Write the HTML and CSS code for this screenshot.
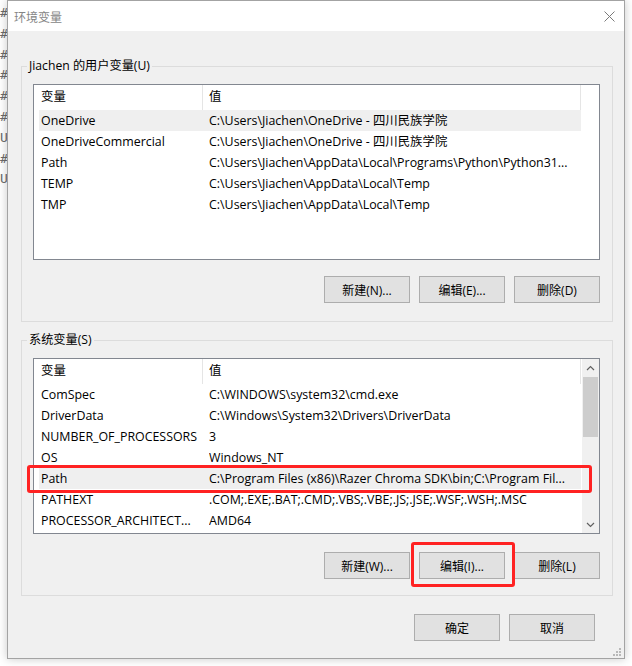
FILE: index.html
```html
<!DOCTYPE html>
<html lang="zh-CN">
<head>
<meta charset="utf-8">
<title>环境变量</title>
<link rel="stylesheet" href="styles.css">
</head>
<body>
<div class="behind">
  <div>#</div><div>#</div><div>#</div><div>#</div><div>#</div><div>#</div><div>U</div><div>#</div><div>U</div>
</div>
<div class="window">
  <div class="titlebar">
    <span class="title">环境变量</span>
    <svg class="close" width="11" height="11" viewBox="0 0 11 11"><path d="M0.5 0.5L10.5 10.5M10.5 0.5L0.5 10.5" stroke="#7a7a7a" stroke-width="1" fill="none"/></svg>
  </div>
  <div class="body">
    <fieldset class="group">
      <legend>Jiachen 的用户变量(U)</legend>
      <div class="list">
        <div class="main">
          <div class="header"><div class="h1">变量</div><div class="h2">值</div></div>
          <div class="row sel"><div class="c1">OneDrive</div><div class="c2">C:\Users\Jiachen\OneDrive - 四川民族学院</div></div>
          <div class="row"><div class="c1">OneDriveCommercial</div><div class="c2">C:\Users\Jiachen\OneDrive - 四川民族学院</div></div>
          <div class="row"><div class="c1">Path</div><div class="c2">C:\Users\Jiachen\AppData\Local\Programs\Python\Python31...</div></div>
          <div class="row"><div class="c1">TEMP</div><div class="c2">C:\Users\Jiachen\AppData\Local\Temp</div></div>
          <div class="row"><div class="c1">TMP</div><div class="c2">C:\Users\Jiachen\AppData\Local\Temp</div></div>
        </div>
        <div class="filler"></div>
      </div>
      <div class="buttons first">
        <button class="btn">新建(N)...</button>
        <button class="btn">编辑(E)...</button>
        <button class="btn">删除(D)</button>
      </div>
    </fieldset>
    <fieldset class="group second">
      <legend>系统变量(S)</legend>
      <div class="list">
        <div class="main">
          <div class="header"><div class="h1">变量</div><div class="h2">值</div></div>
          <div class="row"><div class="c1">ComSpec</div><div class="c2">C:\WINDOWS\system32\cmd.exe</div></div>
          <div class="row"><div class="c1">DriverData</div><div class="c2">C:\Windows\System32\Drivers\DriverData</div></div>
          <div class="row"><div class="c1">NUMBER_OF_PROCESSORS</div><div class="c2">3</div></div>
          <div class="row"><div class="c1">OS</div><div class="c2">Windows_NT</div></div>
          <div class="row sel"><div class="c1">Path</div><div class="c2">C:\Program Files (x86)\Razer Chroma SDK\bin;C:\Program Fil...</div></div>
          <div class="row"><div class="c1">PATHEXT</div><div class="c2">.COM;.EXE;.BAT;.CMD;.VBS;.VBE;.JS;.JSE;.WSF;.WSH;.MSC</div></div>
          <div class="row"><div class="c1">PROCESSOR_ARCHITECT...</div><div class="c2">AMD64</div></div>
        </div>
        <div class="scrollbar">
          <div class="arrow"><svg width="9" height="6" viewBox="0 0 9 6"><path d="M1 5L4.5 1.5L8 5" stroke="#606060" stroke-width="1.2" fill="none"/></svg></div>
          <div class="track"><div class="thumb"></div></div>
          <div class="arrow"><svg width="9" height="6" viewBox="0 0 9 6"><path d="M1 1L4.5 4.5L8 1" stroke="#606060" stroke-width="1.2" fill="none"/></svg></div>
        </div>
      </div>
      <div class="buttons">
        <button class="btn">新建(W)...</button>
        <button class="btn">编辑(I)...</button>
        <button class="btn">删除(L)</button>
      </div>
    </fieldset>
    <div class="footer">
      <button class="btn">确定</button>
      <button class="btn">取消</button>
    </div>
  </div>
  <div class="mark mark-path"></div>
  <div class="mark mark-edit"></div>
  <svg class="grip" width="8" height="8" viewBox="0 0 8 8" fill="#b8b8b8"><rect x="6" y="0" width="2" height="2"/><rect x="3" y="3" width="2" height="2"/><rect x="6" y="3" width="2" height="2"/><rect x="0" y="6" width="2" height="2"/><rect x="3" y="6" width="2" height="2"/><rect x="6" y="6" width="2" height="2"/></svg>
</div>
</body>
</html>
```
FILE: styles.css
```css
html, body {
  margin: 0;
  padding: 0;
}
body {
  width: 632px;
  height: 666px;
  overflow: hidden;
  background: #ffffff;
  display: flex;
  font-family: "Open Sans", "Noto Sans CJK SC", sans-serif;
  font-size: 12px;
  color: #000;
}
.behind {
  width: 7px;
  flex: none;
  overflow: hidden;
  padding-top: 3px;
  color: #6a6a6a;
  font-family: "DejaVu Sans Mono", monospace;
  font-size: 13px;
  line-height: 20.8px;
}
.window {
  position: relative;
  width: 618px;
  height: 659px;
  flex: none;
  box-sizing: border-box;
  border: 1px solid #a3a3a3;
  background: #f0f0f0;
  box-shadow: 0 0 9px rgba(0, 0, 0, 0.22);
  display: flex;
  flex-direction: column;
}
.titlebar {
  height: 30px;
  flex: none;
  background: #ffffff;
  display: flex;
  align-items: center;
  justify-content: space-between;
  padding: 0 9px 0 6px;
}
.title {
  color: #858585;
  font-family: "Noto Sans CJK SC", sans-serif;
  font-size: 12px;
}
.close {
  display: block;
}
.body {
  flex: 1;
  display: flex;
  flex-direction: column;
  padding: 27px 11px 0 13px;
}
.group {
  margin: 0;
  padding: 10px 12px 18px 11px;
  border: 1px solid #dcdcdc;
  min-width: 0;
}
.group.second {
  margin-top: 10px;
  padding-bottom: 16px;
}
.group legend {
  margin-left: -6px;
  padding: 0 2px;
  line-height: 16px;
  font-size: 12.2px;
}
.list {
  height: 176px;
  box-sizing: border-box;
  border: 1px solid #828790;
  background: #ffffff;
  display: flex;
  font-size: 12.4px;
}
.main {
  width: 547px;
  flex: none;
}
.filler {
  flex: 1;
}
.header {
  display: flex;
  height: 25px;
  line-height: 24px;
}
.h1 {
  width: 161px;
  padding-left: 7px;
  border-right: 1px solid #e5e5e5;
}
.h2 {
  flex: 1;
  padding-left: 6px;
  border-right: 1px solid #e5e5e5;
}
.row {
  display: flex;
  height: 21px;
  line-height: 21px;
  margin-left: 5px;
  white-space: nowrap;
}
.row.sel {
  background: #efefef;
}
.c1 {
  width: 168px;
  flex: none;
  padding-left: 2px;
  overflow: hidden;
}
.c2 {
  flex: 1;
  overflow: hidden;
}
.scrollbar {
  width: 17px;
  flex: none;
  margin-left: auto;
  background: #f0f0f0;
  display: flex;
  flex-direction: column;
}
.arrow {
  height: 17px;
  display: flex;
  align-items: center;
  justify-content: center;
}
.arrow svg {
  display: block;
}
.track {
  flex: 1;
  padding: 1px 1px 0 1px;
}
.thumb {
  height: 60px;
  background: #cdcdcd;
}
.buttons {
  display: flex;
  justify-content: flex-end;
  gap: 9px;
  margin-top: 18px;
}
.buttons.first {
  margin-top: 16px;
}
.btn {
  width: 86px;
  height: 27px;
  box-sizing: border-box;
  margin: 0;
  padding: 0;
  border: 1px solid #adadad;
  background: #e1e1e1;
  font-family: "Open Sans", "Noto Sans CJK SC", sans-serif;
  font-size: 12px;
  color: #000;
}
.footer {
  display: flex;
  justify-content: flex-end;
  gap: 9px;
  margin-top: 18px;
  padding-right: 18px;
}
.mark {
  position: absolute;
  box-sizing: border-box;
  border: 3px solid #ff2222;
  border-radius: 3px;
}
.mark-path {
  left: 19px;
  top: 464px;
  width: 565px;
  height: 28px;
}
.mark-edit {
  left: 403px;
  top: 541px;
  width: 104px;
  height: 45px;
}
.grip {
  position: absolute;
  right: 3px;
  bottom: 2px;
}
```
